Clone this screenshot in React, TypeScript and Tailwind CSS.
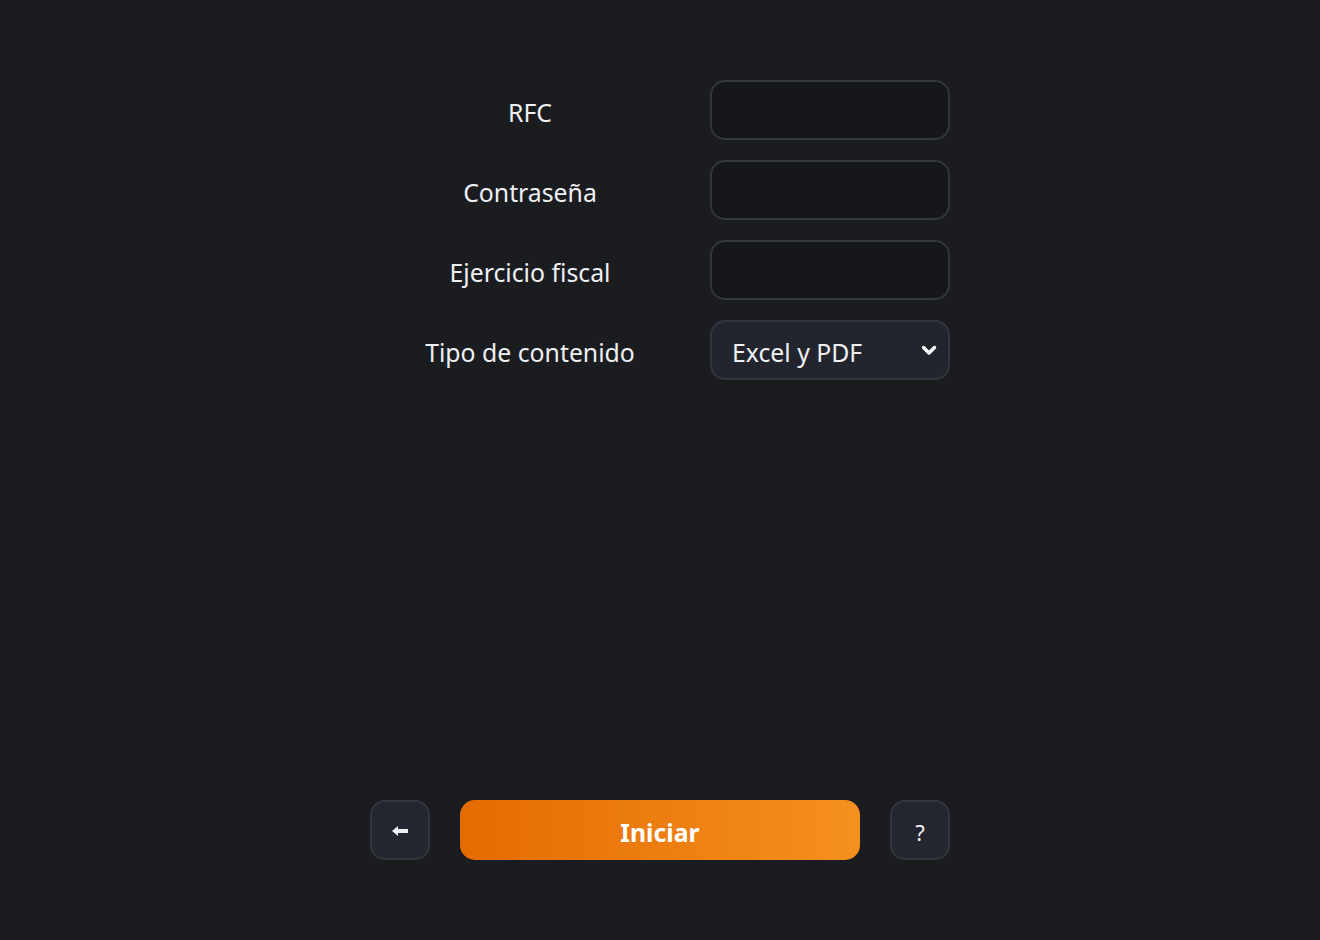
import React from "react";

const font = { fontFamily: '"Noto Sans", "Open Sans", sans-serif' };

function Row({ label, children }: { label: string; children: React.ReactNode }) {
  return (
    <div className="flex items-center gap-5 h-[60px]">
      <div className="w-[320px] text-center text-[24.8px] leading-[32px] pt-[3px] text-[#eef0f4]">{label}</div>
      {children}
    </div>
  );
}

function Input() {
  return (
    <input
      className="w-[240px] h-[60px] rounded-[15px] border-2 border-[#33363e] bg-[#16171b] outline-none px-5 text-[24px] text-white"
      style={font}
    />
  );
}

export default function App() {
  return (
    <div className="w-[1320px] h-[940px] bg-[#1b1c20] flex flex-col items-center" style={font}>
      <div className="mt-[80px] w-[580px] flex flex-col gap-5">
        <Row label="RFC">
          <Input />
        </Row>
        <Row label="Contraseña">
          <Input />
        </Row>
        <Row label="Ejercicio fiscal">
          <Input />
        </Row>
        <Row label="Tipo de contenido">
          <div className="w-[240px] h-[60px] rounded-[15px] border-2 border-[#33363e] bg-[#22252d] flex items-center justify-between pl-[20px] pr-[10px]">
            <span className="text-[24.8px] leading-[32px] pt-[3px] text-[#eef0f4]">Excel y PDF</span>
            <svg width="18" height="18" viewBox="0 0 18 18">
              <path d="M3.5 6.5 L9 12 L14.5 6.5" fill="none" stroke="#ffffff" strokeWidth="3.4" strokeLinecap="round" strokeLinejoin="round" />
            </svg>
          </div>
        </Row>
      </div>
      <div className="mt-[420px] w-[580px] flex items-center gap-[30px]">
        <button className="w-[60px] h-[60px] rounded-[15px] border-2 border-[#33363e] bg-[#23262e] flex items-center justify-center">
          <svg width="18" height="12" viewBox="0 0 18 12" className="mt-[2px]">
            <path d="M1 6 L7 1 L7 4 L17 4 L17 8 L7 8 L7 11 Z" fill="#eef0f4" />
          </svg>
        </button>
        <button className="w-[400px] h-[60px] rounded-[15px] bg-gradient-to-r from-[#e46b00] to-[#f5901e] text-white font-bold text-[24.8px] leading-[32px] pt-[3px]">
          Iniciar
        </button>
        <button className="w-[60px] h-[60px] rounded-[15px] border-2 border-[#33363e] bg-[#23262e] flex items-center justify-center text-[22px] leading-[28px] pt-[3px] text-[#eef0f4]">
          ?
        </button>
      </div>
    </div>
  );
}
